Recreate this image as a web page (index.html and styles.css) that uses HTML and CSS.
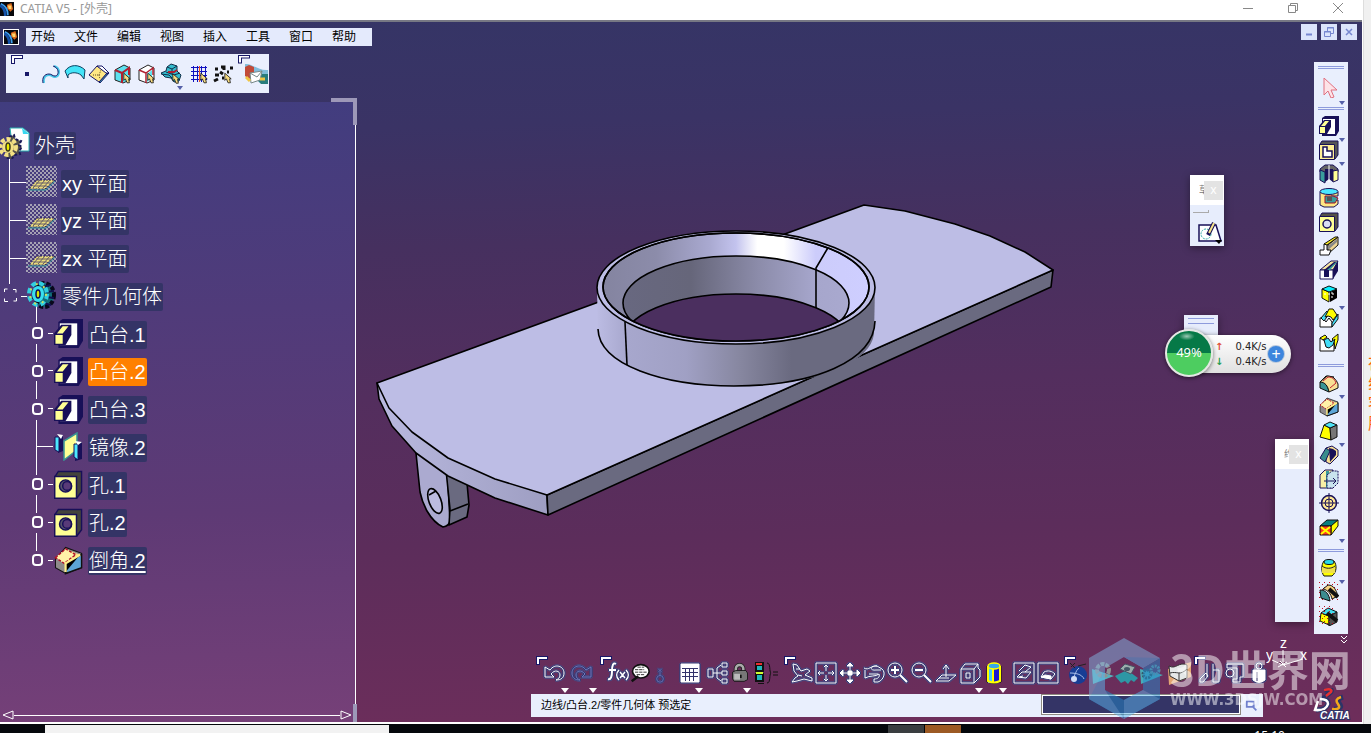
FILE: index.html
```
<!DOCTYPE html>
<html lang="zh-CN">
<head>
<meta charset="utf-8">
<title>CATIA V5 - [外壳]</title>
<link rel="stylesheet" href="styles.css">
</head>
<body>
<svg class="defs" aria-hidden="true">
  <defs>
    <pattern id="dither" width="4" height="4" patternUnits="userSpaceOnUse"><path d="M0 0h2v2H0zM2 2h2v2H2z" fill="#a5a1b4"/></pattern>
    <pattern id="dots" width="5" height="5" patternUnits="userSpaceOnUse"><path d="M0 0h1v1H0zM3 2h1v1H3z" fill="#c01020"/></pattern>
    <linearGradient id="wall"><stop offset="0" stop-color="#bcbce3"/><stop offset=".11" stop-color="#a7a7cd"/><stop offset=".32" stop-color="#a0a0c4"/><stop offset=".52" stop-color="#86869f"/><stop offset=".7" stop-color="#6a6a80"/><stop offset="1" stop-color="#6a6a80"/></linearGradient>
    <linearGradient id="bevel"><stop offset="0" stop-color="#8484a0"/><stop offset=".2" stop-color="#8c8caa"/><stop offset=".4" stop-color="#a9a9d0"/><stop offset=".5" stop-color="#c3c3ee"/><stop offset=".58" stop-color="#fff"/><stop offset=".68" stop-color="#fff"/><stop offset=".8" stop-color="#ccccfb"/><stop offset="1" stop-color="#ceceff"/></linearGradient>
    <linearGradient id="bore"><stop offset="0" stop-color="#686880"/><stop offset=".3" stop-color="#66667a"/><stop offset=".6" stop-color="#8c8caa"/><stop offset=".85" stop-color="#a6a6cc"/><stop offset="1" stop-color="#a9a9cf"/></linearGradient>
    <linearGradient id="edge"><stop offset="0" stop-color="#b9b9df"/><stop offset="1" stop-color="#9e9ec2"/></linearGradient>
    <clipPath id="rim"><ellipse cx="736" cy="287" rx="133" ry="54"/></clipPath>
    <clipPath id="throat"><ellipse cx="736" cy="303" rx="113" ry="47"/></clipPath>
  </defs>
  <symbol id="earth" viewBox="0 0 16 16"><path fill="#08080c" d="M0 0h16v16H0z"/><path fill="#d9661a" d="M8 3l5-2 2 7-3 3-4-4z"/><path fill="#ffd66a" d="M9 4h4v4h-3z"/><path d="M1 2c5 2 8 7 8 13" stroke="#3fa0ee" stroke-width="2" fill="none"/><path d="M0 4c4 2 6 6 6 12" stroke="#1552a8" stroke-width="3" fill="none"/></symbol>
  <symbol id="hand" viewBox="0 0 10 14"><path fill="#f8dc80" stroke="#111" d="M1 1v9l2-2 2 5h3L7 8h2z"/></symbol>
  <symbol id="pad" viewBox="0 0 20 20"><path fill="#181058" d="M3 2l3-2h14v15l-3 5H3z"/><path fill="#fff" d="M4 3h12v15H4z"/><path fill="#181058" d="M5 4h7v7l-4 7H0v-8z"/><path fill="#ffff94" d="M1 11h5v6H1zM2 10l4-5h4l-4 5z"/></symbol>
  <symbol id="pocket" viewBox="0 0 20 20"><path fill="#555" stroke="#181058" d="M1 4l2-3h16v14l-3 4z"/><path fill="#ffef94" stroke="#181058" d="M.5 4.5h15v15H.5z"/><path fill="#fff" stroke="#181058" stroke-width="1.500" d="M4 7h4v4h5v6H4z"/></symbol>
  <symbol id="hole" viewBox="0 0 20 20"><path fill="#555248" stroke="#181058" d="M1 4l2-3h16v14l-3 4z"/><path fill="#ffff94" stroke="#181058" d="M.5 4.5h15v15H.5z"/><circle cx="8" cy="12" r="4" fill="#d8dcf4" stroke="#181058" stroke-width="1.500"/></symbol>
  <symbol id="holetree" viewBox="0 0 20 20"><path fill="#44443c" stroke="#181058" d="M1 4l2-3h16v14l-3 4z"/><path fill="#ffff94" stroke="#181058" d="M.5 4.5h15v15H.5z"/><circle cx="8" cy="11" r="4.200" fill="#55536a" stroke="#181058"/><circle cx="9" cy="11" r="3" fill="#583a78" stroke="#181058"/></symbol>
  <symbol id="shaft" viewBox="0 0 20 20"><path fill="#666" stroke="#181058" d="M1 8V5l5-4h8l5 4v3l-4-2-2 3H7z"/><path fill="#399c9c" stroke="#181058" d="M1 6l5 2v11l-5-3z"/><path fill="#181058" d="M6 5h8v13l-4-3-4 3z"/><path fill="#ffff94" stroke="#181058" d="M14 7l5-1v10l-5 2z"/><path stroke="#fff" d="M10 1v17"/></symbol>
  <symbol id="groove" viewBox="0 0 20 20"><path fill="#ffe784" stroke="#181058" d="M1 4v13l4 2h10l4-3v-4h-7V8h7V4z"/><ellipse cx="10" cy="3.500" rx="9" ry="3" fill="#4ce8ff" stroke="#181058"/><path fill="#399c9c" stroke="#a01028" d="M6 8h8l5 2-3 5H6z"/><path fill="#555" d="M8 9h5v4H8z"/></symbol>
  <symbol id="rib" viewBox="0 0 20 20"><path fill="#efd694" stroke="#111" d="M9 18V9l10-8v8z"/><path fill="#888" d="M8 11l10-8v3l-9 8z"/><path fill="#fff" stroke="#111" d="M1 19v-5h4V8h3v6h4l-2 5z"/><path fill="#ffee20" stroke="#111" d="M5 8l11-7h3L8 9z"/></symbol>
  <symbol id="slot" viewBox="0 0 20 20"><path fill="#f7e7a0" stroke="#181058" d="M1 10L12 1h7l-5 9z"/><path fill="#fff" stroke="#181058" d="M1 19v-9h13v9z"/><path fill="#181058" d="M14 19v-9l5-9v10zM5 10L15 2h3l-8 8v7H5z"/><path fill="#399c9c" d="M8 10l9-8h1l-7 8z"/></symbol>
  <symbol id="rot" viewBox="0 0 20 20"><path fill="#ff0" stroke="#111" d="M3 5l7 3v10l-7-4z"/><path fill="#000" d="M11 8l7-3v9l-7 4z"/><path fill="#08efff" stroke="#111" d="M3 5l7-3 8 3-8 3z"/><path stroke="#fff" stroke-dasharray="2 2" d="M13 8v8M5 10h10"/></symbol>
  <symbol id="loft" viewBox="0 0 20 20"><path fill="#fff" stroke="#111" d="M1 19v-9h3l3 4 3-4 3 4v5z"/><path fill="#43ddf7" stroke="#111" d="M2 10l6-7 2 3-5 7zM13 15l6-9v5l-6 8z"/><path fill="#ff0" stroke="#111" d="M6 9l4-8h4l4 6-4 5-2-3-3-1z"/></symbol>
  <symbol id="loftcut" viewBox="0 0 20 20"><path fill="#fff" stroke="#111" d="M1 19V6l3 1 4 6 5-4 2-2v12z"/><path fill="#ff0" stroke="#111" d="M1 6l5-3 2 2-4 3zM13 7l6-5v6l-3 9-1-8z"/><path fill="#43ddf7" stroke="#111" d="M5 8l4-2 3 4 4-3-2 6-4 3-3-1z"/></symbol>
  <symbol id="fillet" viewBox="0 0 20 20"><path fill="#8a8a8a" stroke="#111" d="M1 9l6-6 8 1-8 6z"/><path fill="#399494" stroke="#111" d="M1 9c5-1 8 4 9 10l-9-4z"/><path fill="#f7df94" stroke="#111" d="M1 9l7-6c6 0 9 3 11 8v4l-9 4C9 13 6 9 1 9z"/><path fill="none" stroke="#c02030" d="M4 8l5-4c5 0 7 3 8 6l-6 5"/></symbol>
  <symbol id="chamfer" viewBox="0 0 20 20"><path fill="#8f8b8b" stroke="#111" stroke-width=".7" d="M1 9l7-8 11 4v10L8 19l-7-4z"/><path fill="#5da6d6" stroke="#111" d="M8 19l1-8 10-5v9z"/><path fill="#f7dc8c" d="M1 8l7-6 10 4-9 7z"/><path fill="#fff3a8" stroke="#b01028" stroke-dasharray="2 1" d="M1 8l7-6 7 4-8 6z"/><path stroke="#fff08b" stroke-width="1.500" d="M8 18v-6l10-6"/></symbol>
  <symbol id="draft" viewBox="0 0 20 20"><path fill="#ff0" stroke="#111" d="M5 4l6 3 1 12-11-3z"/><path fill="#777" stroke="#111" d="M11 7l7-3v12l-6 3z"/><path fill="#4de2f4" stroke="#111" d="M5 4l6-3 7 3-7 3z"/></symbol>
  <symbol id="shell" viewBox="0 0 20 20"><path fill="#f8df94" stroke="#181058" d="M7 3l6-2 6 4v6l-8 8-4-2z"/><path fill="#181058" d="M10 3l4 1 3 2v4l-6 7z"/><path fill="#398c8c" stroke="#181058" d="M1 13L7 3l4 3-5 11z"/></symbol>
  <symbol id="thick" viewBox="0 0 20 20"><path fill="#f7efa5" stroke="#181058" d="M1 6l5-5h8v18H1z"/><path fill="#399c9c" d="M7 2h3v17H7z"/><path fill="#c9e4ee" stroke="#181058" stroke-dasharray="2 1" d="M8 6l5-4h6v12l-5 5H8z"/><path stroke="#181058" d="M5 12h12m-3-3l3 3-3 3" fill="none"/></symbol>
  <symbol id="thread" viewBox="0 0 20 20"><circle cx="10" cy="10" r="7.500" fill="#ffe894" stroke="#181058" stroke-width="1.500"/><circle cx="10" cy="10" r="4" fill="none" stroke="#181058"/><path stroke="#181058" d="M10 0v20M0 10h20"/></symbol>
  <symbol id="remove" viewBox="0 0 20 20"><path fill="#087f7f" stroke="#111" d="M1 9l7-6h11l-7 6z"/><path fill="#ff0" stroke="#111" d="M12 9l7-6v6l-7 9z"/><path fill="#ff3a20" stroke="#111" d="M1 9h11v9H1z"/><path stroke="#ff0" stroke-width="2" d="M2 10l9 7M11 10l-9 7"/></symbol>
  <symbol id="barrel" viewBox="0 0 20 20"><path fill="#ff0" stroke="#111" d="M5 3C2 7 2 14 5 18h8c5-4 5-11 2-15z"/><path fill="#efe04a" d="M3 9h13v6H3z"/><path fill="none" stroke="#222" d="M3 8c4 3 9 3 13 0"/><ellipse cx="10" cy="4" rx="5" ry="2.500" fill="#28d8e8" stroke="#111"/></symbol>
  <symbol id="dress" viewBox="0 0 20 20"><path fill="url(#dots)" d="M0 0h20v20H0z"/><path fill="#3c8c90" stroke="#111" d="M1 8c6 0 9 4 10 11L2 16z"/><path fill="#f4cf80" stroke="#111" d="M4 7l5-4c6 0 8 5 10 11l-6 3C12 12 9 8 4 7z"/><path stroke="#111" stroke-width="4" d="M10 7l9 8"/></symbol>
  <symbol id="dress2" viewBox="0 0 20 20"><path fill="#ff0" stroke="#111" d="M2 7l8 3v9L1 15z"/><path fill="#555" stroke="#111" d="M10 10l8-4v10l-8 4z"/><path fill="#46dced" stroke="#111" d="M2 7l7-5 9 4-8 4z"/><path fill="url(#dots)" d="M0 0h14v20H0z"/><path stroke="#111" stroke-width="4" d="M8 7l10 8"/></symbol>
</svg>

<div class="desktop">
  <section class="app">
    <header class="titlebar">
      <svg class="appicon"><use href="#earth"/></svg>
      <h1>CATIA V5 - [外壳]</h1>
      <div class="winbtns">
        <button aria-label="最小化"><svg viewBox="0 0 12 12"><path d="M1 6.500h10"/></svg></button>
        <button aria-label="还原"><svg viewBox="0 0 12 12"><path d="M1.500 3.500h7v7h-7zM3.500 3V1.500h7v7H9"/></svg></button>
        <button aria-label="关闭"><svg viewBox="0 0 12 12"><path d="M1 1l10 10M11 1L1 11"/></svg></button>
      </div>
    </header>

    <main class="workspace">
      <svg class="model" viewBox="0 22 1362 700" preserveAspectRatio="xMidYMid meet" role="img" aria-label="外壳零件">
        <g stroke="#000" stroke-width="1.600" stroke-linejoin="round" fill="none">
          <path fill="#abaad0" d="M416 453l4 39q2 10 7 19 7 12 16 16 6-1 7-6l-3-55z"/>
          <path fill="#6a6a80" d="M446 470l21 13 2 22-2 12-18 8 1-16z"/>
          <path d="M450 511l18-7"/>
          <ellipse cx="435" cy="501" rx="6" ry="13" transform="rotate(-21 435 501)" fill="#bcbce0"/>
          <path d="M429 495l7-4"/>
          <path fill="url(#edge)" d="M377 383l2 16 13 27 24 27 32 23 47 22 53 17-1-20z"/>
          <path fill="#6a6a80" d="M547 495l1 20 503-228 2-17z"/>
          <path fill="#bdbde5" d="M377 383L864 205l41 6 50 13 35 12 35 16 28 18-506 225-52-16-47-21-36-26-23-24z"/>
          <path fill="url(#wall)" stroke="none" d="M597 288l1 46c4 30 60 52 138 52s134-22 138-52l1-46z"/>
          <path d="M598 329c1 36 66 57 136 57 80 0 140-25 141-65"/>
          <path d="M625 322l2 43"/>
          <ellipse cx="736" cy="287.500" rx="139" ry="56.500" fill="#bdbde5"/>
          <ellipse cx="736" cy="287" rx="133" ry="54" fill="url(#bevel)"/>
          <g clip-path="url(#rim)">
            <ellipse cx="736" cy="303" rx="113" ry="47" fill="url(#bore)"/>
            <path d="M829 246l-13 22v40"/>
            <g clip-path="url(#throat)"><ellipse cx="736" cy="341" rx="113" ry="47" fill="#4b2f5f"/></g>
          </g>
          <ellipse cx="736" cy="287" rx="133" ry="54"/>
        </g>
      </svg>

      <div class="topbar">
        <svg class="docicon"><use href="#earth"/></svg>
        <nav class="menu">
          <button>开始</button><button>文件</button><button>编辑</button><button>视图</button><button>插入</button><button>工具</button><button>窗口</button><button>帮助</button>
        </nav>
        <div class="mdi">
          <button aria-label="最小化文档"><svg viewBox="0 0 16 16"><path d="M5 10.500h6" stroke-width="2"/></svg></button>
          <button aria-label="还原文档"><svg viewBox="0 0 16 16"><path d="M3.500 7.500h6v5h-6zM6.500 7V3.500h6v6H10M3 8h7M6 4h7"/></svg></button>
          <button aria-label="关闭文档"><svg viewBox="0 0 16 16"><path d="M5 5l6 6M11 5l-6 6" stroke-width="1.500"/></svg></button>
        </div>
      </div>

      <div class="body">
        <div class="left">
          <div class="tools corner">
            <button aria-label="点"><svg viewBox="0 0 22 22"><path fill="#181868" d="M9 9h4v4H9z"/></svg></button>
            <button aria-label="曲线"><svg viewBox="0 0 22 22"><path d="M4 20c-1-5 1-8 5-8 3 0 3 2 6 2 5 0 6-9-1-11" fill="none" stroke="#48c8e8" stroke-width="2"/><path d="M3 20c-1-5 1-9 6-9 3 0 3 2 6 2 4 0 5-8-2-10" fill="none" stroke="#181868"/></svg></button>
            <button aria-label="曲面"><svg viewBox="0 0 22 22"><path fill="#43e4f8" stroke="#104060" d="M1 8c5-7 14-7 20-1l-1 9-3-4c-4-3-10-3-13 0v3z"/></svg></button>
            <button aria-label="实体"><svg viewBox="0 0 22 22"><path fill="#399cac" stroke="#181868" d="M11 19l7-8 3-1-9 10z"/><path fill="#ffe784" stroke="#181868" d="M1 12l8-9 10 7-8 9z"/><path fill="#fff" stroke="#181868" d="M9 3h5l7 7h-3z"/><path d="M5 12h6l2-5M11 12l1 4" fill="none" stroke="#604a20" stroke-dasharray="1 1"/></svg></button>
            <button aria-label="选择几何体"><svg viewBox="0 0 22 22"><path fill="#5de1ef" stroke="#222" d="M3 7l9-5 6 3v12l-7 3-8-3z"/><path d="M3 7l7 3v10M10 10l7-5v7" fill="none" stroke="#b02030" stroke-width="2"/><use href="#hand" x="11" y="9" width="8" height="12"/></svg></button>
            <button aria-label="选择边线"><svg viewBox="0 0 22 22"><path fill="#fff" stroke="#222" d="M3 7l9-5 6 3v12l-7 3-8-3z"/><path d="M3 7l7 3v10M10 10l7-5v7" fill="none" stroke="#b02030" stroke-width="1.500"/><path fill="#5de1ef" d="M11 11l5-4v8l-5 4z"/><use href="#hand" x="11" y="9" width="8" height="12"/></svg></button>
            <button class="drop" aria-label="选择特征"><svg viewBox="0 0 22 22"><path fill="#35bccd" stroke="#12304a" d="M7 4l4-3 6 2v5l4 4-2 6-5 1-3-4-6-1-4-4 5-2z"/><path d="M7 4l5 2 5-3M12 6v5M6 9l8 3 6-2M1 11l8 1 3 3" fill="none" stroke="#12304a"/><path d="M8 9h6l3-2" stroke="#b02030" stroke-width="2" fill="none"/><use href="#hand" x="12" y="10" width="8" height="11"/></svg></button>
            <button class="shift" aria-label="网格选择"><svg viewBox="0 0 22 22"><path d="M3 4.500h16M3 8.500h16M3 12.500h16M3 16.500h16M5.500 3v16M9.500 3v16M13.500 3v16M17.500 3v16" stroke="#1010c0"/><path d="M11.500 3v16" stroke="#f05020"/><use href="#hand" x="12" y="9" width="8" height="12"/></svg></button>
            <button aria-label="点选择"><svg viewBox="0 0 22 22"><path d="M3 6h3M9 4h3v3M18 5h3M3 12h4M2 18l4-2M15 9h2M8 9l3 2M10 15h2" stroke="#111" stroke-width="3"/><use href="#hand" x="12" y="9" width="8" height="12"/></svg></button>
            <button class="mail corner" aria-label="发送"><svg viewBox="0 0 24 24"><path fill="#82bddb" d="M1 2c7-1 13 7 23 6v10H14C12 10 8 7 1 6z"/><path fill="#c24a38" d="M1 5l4-2 5 2v9l-5 3-4-3z"/><path fill="#287c7c" d="M16 12h8v10h-7l-3-3z"/><path fill="#fff" stroke="#788" d="M6 11l12-2-2 9-9 3z"/><path fill="none" stroke="#788" d="M6 11l7 4 5-6"/><path d="M2 15l4 4M16 17h5" stroke="#efc543" stroke-width="3" fill="none"/></svg></button>
          </div>

          <aside class="panel">
            <svg class="links" viewBox="0 0 356 620" aria-hidden="true">
              <path d="M9.500 55v127M10 80.500h16M10 118.500h16M10 156.500h16M21 194.500h6M36.500 203v18M36.500 242v18M36.500 279v18M36.500 318v55M37 344.500h16M36.500 393v18M36.500 431v18M48 231.500h5M48 268.500h5M48 306.500h5M48 382.500h5M48 420.500h5M48 458.500h5"/>
              <path d="M4.500 190v-3h3M13 187.500h3v3M16.500 196v3h-3M8 199.500H4.500v-3"/>
              <g stroke-width="2"><rect x="33" y="226" width="9" height="10" rx="3"/><rect x="33" y="264" width="9" height="10" rx="3"/><rect x="33" y="302" width="9" height="10" rx="3"/><rect x="33" y="377" width="9" height="10" rx="3"/><rect x="33" y="415" width="9" height="10" rx="3"/><rect x="33" y="453" width="9" height="10" rx="3"/></g>
            </svg>
            <ul class="tree">
              <li class="root"><svg viewBox="0 0 30 32"><path fill="#fff" stroke="#28aeb0" d="M10 1h13l6 5v18H13z"/><path fill="#38d8f0" d="M22 1l7 6h-6z"/><path d="M9 10l5-2 1 4 6 2-2 4 3 2-3 4 1 3-6 1-2 4-6-1z" fill="#55524a" stroke="#181858" stroke-dasharray="3 2" stroke-width="2"/><circle cx="8" cy="20" r="6" fill="#f4e184"/><circle cx="8" cy="20" r="8" fill="none" stroke="#f4e184" stroke-width="4" stroke-dasharray="4 2"/><ellipse cx="8" cy="20" rx="2" ry="4" fill="#ee0" stroke="#383818" stroke-width="1.500"/></svg><span>外壳</span></li>
              <li class="l1"><svg viewBox="0 0 31 31"><path fill="url(#dither)" d="M0 0h31v31H0z"/><path d="M11 14h18l-10 9H3z" fill="#e9db7c" stroke="#28205e" stroke-dasharray="2 1"/><path d="M2 24h18l9-9" fill="none" stroke="#399c9c"/><path d="M10 17h15M7 20h14M14 14l-7 8M19 14l-7 8M24 14l-7 8" stroke="#645a68" fill="none"/></svg><span>xy 平面</span></li>
              <li class="l1"><svg viewBox="0 0 31 31"><path fill="url(#dither)" d="M0 0h31v31H0z"/><path d="M11 14h18l-10 9H3z" fill="#e9db7c" stroke="#28205e" stroke-dasharray="2 1"/><path d="M2 24h18l9-9" fill="none" stroke="#399c9c"/><path d="M10 17h15M7 20h14M14 14l-7 8M19 14l-7 8M24 14l-7 8" stroke="#645a68" fill="none"/></svg><span>yz 平面</span></li>
              <li class="l1"><svg viewBox="0 0 31 31"><path fill="url(#dither)" d="M0 0h31v31H0z"/><path d="M11 14h18l-10 9H3z" fill="#e9db7c" stroke="#28205e" stroke-dasharray="2 1"/><path d="M2 24h18l9-9" fill="none" stroke="#399c9c"/><path d="M10 17h15M7 20h14M14 14l-7 8M19 14l-7 8M24 14l-7 8" stroke="#645a68" fill="none"/></svg><span>zx 平面</span></li>
              <li class="l1"><svg viewBox="0 0 31 31"><ellipse cx="18" cy="16" rx="10" ry="12" fill="#106d7a" stroke="#08081c" stroke-width="4" stroke-dasharray="4 2"/><path d="M16 8l9-2M20 13l8-1M20 18l8 1M17 24l8 2" stroke="#101050" stroke-width="2"/><ellipse cx="12" cy="15" rx="6" ry="8" fill="#38dff0"/><ellipse cx="12" cy="15" rx="9" ry="11" fill="none" stroke="#30cfe0" stroke-width="4" stroke-dasharray="5 3"/><ellipse cx="12" cy="15" rx="8" ry="10" fill="none" stroke="#c9e060" stroke-width="2" stroke-dasharray="2 6"/><ellipse cx="12" cy="15" rx="2" ry="4" fill="#d8e800" stroke="#101050" stroke-width="1.500"/></svg><span>零件几何体</span></li>
              <li class="l2"><svg><use href="#pad"/></svg><span>凸台.1</span></li>
              <li class="l2"><svg><use href="#pad"/></svg><span class="sel">凸台.2</span></li>
              <li class="l2"><svg><use href="#pad"/></svg><span>凸台.3</span></li>
              <li class="l2"><svg viewBox="0 0 29 29"><path fill="#181058" d="M5 5l4-2v16l-5 2zM22 11l6-1v17l-7 2z"/><path fill="#4ce8ff" stroke="#181058" d="M1 5h4v15l-4-2z"/><path fill="#ffff94" stroke="#399494" stroke-width="1.500" d="M10 9l13-8v17l-13 10z"/><path fill="#4ce8ff" stroke="#181058" d="M20 12h4v16l-4-3z"/><path fill="#fff" d="M3 2l6 1-2 4zM21 9l7 1-4 3z"/></svg><span>镜像.2</span></li>
              <li class="l2"><svg><use href="#holetree"/></svg><span>孔.1</span></li>
              <li class="l2"><svg><use href="#holetree"/></svg><span>孔.2</span></li>
              <li class="l2"><svg><use href="#chamfer"/></svg><span class="cur">倒角.2</span></li>
            </ul>
            <svg class="hscroll" viewBox="0 0 350 12" preserveAspectRatio="none" aria-hidden="true"><path d="M12 6.500h326M1 6l10-4v8zM349 6l-10-4v8z"/></svg>
          </aside>
        </div>

        <div class="middle">
          <div class="viewbar">
            <div class="grp corner ga">
              <button class="w28 drop" aria-label="撤销"><svg viewBox="0 0 24 24"><path d="M3 6v10h9l-3-3c4-5 9-3 9 1 0 3-2 4-4 5 5 0 8-2 8-7 0-7-9-10-14-3z"/></svg></button>
              <button class="w28 drop dim" aria-label="重做"><svg viewBox="0 0 24 24"><path d="M21 6v10h-9l3-3c-4-5-9-3-9 1 0 3 2 4 4 5-5 0-8-2-8-7 0-7 9-10 14-3z"/></svg></button>
            </div>
            <div class="grp corner gb">
              <button aria-label="公式"><svg viewBox="0 0 24 24"><path d="M10 3C7 1 6 5 6 10s-1 9-4 8M3 9h7" stroke-width="2"/><path d="M13 9c-3 3-3 7 0 10M20 9c3 3 3 7 0 10M14 11l5 6M19 11l-5 6" stroke-width="1.500"/></svg></button>
              <button class="w20 plain" aria-label="注释"><svg viewBox="0 0 24 24"><ellipse cx="13" cy="10" rx="10" ry="8" fill="#fff" stroke="#111" stroke-width="2"/><path d="M2 22l8-6" stroke="#111" stroke-width="3"/><path d="M6 8h11M6 11h14M8 14h9M9 5h8" stroke="#111" stroke-dasharray="4 1"/></svg></button>
              <button class="w20 dim" aria-label="钥匙"><svg viewBox="0 0 24 24"><path d="M10 7l4 4M14 7l-4 4M12 11v4"/><circle cx="12" cy="19" r="4"/></svg></button>
              <button class="drop ml8" aria-label="设计表"><svg viewBox="0 0 24 24"><path fill="#fff" d="M3 3h18v18H3z"/><path stroke="#33336b" d="M4 7.500h16M4 11.500h16M4 15.500h16M7.500 7v13M11.500 7v13M15.500 7v13"/></svg></button>
              <button class="ml4" aria-label="结构"><svg viewBox="0 0 24 24"><path d="M2 8h5v8H2zM16 2h5v4h-5zM16 10h5v4h-5zM16 18h5v4h-5zM7 12h9M11 12V7l4-3M11 12v5l4 3"/></svg></button>
              <button class="w20 plain drop" aria-label="锁定"><svg viewBox="0 0 24 24"><path d="M7 11V7c0-6 9-6 9 0v5" stroke="#222" stroke-width="5" fill="none"/><path d="M7 11V7c0-6 9-6 9 0v5" stroke="#aaa" stroke-width="3" fill="none"/><path fill="#777" stroke="#111" d="M3 11l4-2h12l2 3v8l-4 2H5l-2-3z"/><path fill="#bbb" d="M5 13h7v7H5z"/><path stroke="#111" stroke-width="2" d="M13 14v4"/></svg></button>
              <button class="plain ml4" aria-label="规则"><svg viewBox="0 0 24 24"><path fill="#111" d="M1 1h9v10H1zM1 12h9v9H1z"/><path fill="#e83030" d="M2 2h6v2H2z"/><path fill="#cfff30" d="M2 11h7v2H2z"/><path fill="#20b8bc" d="M3 5h5v4H3zM3 14h5v5H3z"/><path stroke="#111" d="M4 22.500h6M13 2c4 0 2 9 4 10-2 1 0 10-4 10M19 11h5M19 14h5" fill="none"/></svg></button>
            </div>
            <div class="grp corner gc">
              <button aria-label="飞行"><svg viewBox="0 0 24 24"><path d="M3 3l4 1 4 6 6-2 3 2-5 4 7 3v3l-8-2-7 2-5 1 3-4 3-2-4-5z"/><path d="M6 8h4M8 14l4 1"/></svg></button>
              <button aria-label="适应屏幕"><svg viewBox="0 0 24 24"><path d="M2 2h20v20H2zM12 5v5M12 14v5M5 12h5M14 12h5M10 6l2-2 2 2M10 18l2 2 2-2M6 10l-2 2 2 2M18 10l2 2-2 2"/></svg></button>
              <button aria-label="平移"><svg viewBox="0 0 24 24"><path d="M12 2v20M2 12h20"/><path fill="#fff" d="M9 5l3-3 3 3zM9 19l3 3 3-3zM5 9l-3 3 3 3zM19 9l3 3-3 3zM10 10h4v4h-4z"/></svg></button>
              <button aria-label="旋转"><svg viewBox="0 0 24 24"><path d="M2 7c5 3 7-3 13-2l5 3c4 3 2 11-4 13h-4v-3c4 0 6-2 5-5-3 3-9 1-14 4V9M15 5c-8 0-7 5-1 4h5M7 13h9"/></svg></button>
              <button aria-label="放大"><svg viewBox="0 0 24 24"><circle cx="9" cy="9" r="7"/><path d="M5 9h8M9 5v8M14 14l7 7" stroke-width="2"/></svg></button>
              <button aria-label="缩小"><svg viewBox="0 0 24 24"><circle cx="9" cy="9" r="7"/><path d="M5 9h8M14 14l7 7" stroke-width="2"/></svg></button>
              <button aria-label="法线视图"><svg viewBox="0 0 24 24"><path d="M2 20l6-6h14l-7 6zM12 16V4M9 8l3-4 3 4M8 14l-3 3h10"/></svg></button>
              <button class="drop" aria-label="等轴测视图"><svg viewBox="0 0 24 24"><path d="M3 8h13v14H3zM3 8l4-5h13v4l2 2v7l-6 6M16 8l4-5M8 12h4v5H8z"/></svg></button>
              <button class="plain drop" aria-label="着色"><svg viewBox="0 0 24 24"><path fill="#1818d0" stroke="#111" d="M5 5h14v16q-7 3-14 0z"/><path fill="#4cf" d="M6 7h5v15H6z"/><path d="M11 8v14M6 5v15q6 3 12 0V5" stroke="#ff0" stroke-width="2" fill="none"/><ellipse cx="12" cy="5" rx="6" ry="3" fill="#38a8e8" stroke="#ff0" stroke-width="1.500"/></svg></button>
              <button class="ml6" aria-label="隐藏显示"><svg viewBox="0 0 24 24"><path d="M2 2h20v20H2zM5 16l5-5h9l-5 6zM7 10l6-6 6 2-6 5M7 16l4-1"/></svg></button>
              <button aria-label="交换可视空间"><svg viewBox="0 0 24 24"><path d="M2 2h20v20H2z"/><path d="M5 16l3-5c4-2 8-1 11 2l-4 5z"/><path fill="#fff" d="M5 16l4-2 6 1v3z"/></svg></button>
            </div>
            <div class="grp corner gd">
              <button class="plain" aria-label="渲染"><svg viewBox="0 0 24 24"><circle cx="11" cy="14" r="9" fill="#173d94"/><path d="M5 18c4-4 3-8 7-11M3 12c5 0 12 1 14 6" stroke="#a8bde8" fill="none"/><circle cx="7" cy="18" r="3" fill="#d0dcf6"/><path d="M3 2l5 5M8 2L4 6M11 5l8-2" stroke="#222"/></svg></button>
              <button class="plain" aria-label="材料"><svg viewBox="0 0 24 24"><path fill="#54b2bd" d="M1 8l22 7-21 8z"/><circle cx="12" cy="9" r="6" fill="none" stroke="#8e9294" stroke-width="4" stroke-dasharray="4 1"/></svg></button>
              <button class="plain" aria-label="零件"><svg viewBox="0 0 24 24"><path fill="#2e97a5" d="M0 15l12-6 11 8-4 4-3-2-3 4-3-3-4 2z"/><path fill="#9cacac" stroke="#456" d="M5 8l5-5 10 3-4 7z"/><ellipse cx="12" cy="8" rx="3" ry="2" fill="#456"/></svg></button>
              <button class="plain" aria-label="装配"><svg viewBox="0 0 24 24"><path fill="#4aacb7" d="M1 8l23 6-22 9z"/><circle cx="8" cy="13" r="4" fill="none" stroke="#345a68" stroke-width="3" stroke-dasharray="2 1"/><circle cx="16" cy="9" r="4" fill="none" stroke="#6f8f98" stroke-width="3" stroke-dasharray="2 1"/></svg></button>
              <button class="plain ml4" aria-label="曲面分析"><svg viewBox="0 0 24 24"><path fill="#e3a673" d="M1 8L24 1v15L2 24z"/><path fill="#e5e8e8" stroke="#333" d="M2 5c7 4 10-5 18-1v13l-8 3-9-5z"/><path d="M3 12c7-2 10 3 17-4M12 11v9" stroke="#333" fill="none"/></svg></button>
            </div>
            <div class="grp corner ge">
              <button aria-label="测量间距"><svg viewBox="0 0 24 24"><path d="M9 3v13M15 3v6M2 18l6-6 2 3-5 6H2zM15 9h6v12h-6z"/></svg></button>
              <button aria-label="测量项"><svg viewBox="0 0 24 24"><path d="M5 3h16v13h-3v5h-7v-3h4V7H5z"/><circle cx="8" cy="12" r="4"/></svg></button>
              <button aria-label="测量惯量"><svg viewBox="0 0 24 24"><path fill="#fff" d="M7 9h12v10q-6 5-12 0z"/><circle cx="13" cy="5" r="3"/><path stroke="#33336b" d="M11 11v9"/></svg></button>
            </div>
          </div>
          <div class="status">
            <output>边线/凸台.2/零件几何体 预选定</output>
            <input type="text" aria-label="命令">
            <button aria-label="搜索"><svg viewBox="0 0 16 16"><path d="M2 3h8v6H2zM8 8l5 5" fill="none" stroke="#7080cc" stroke-width="2"/></svg></button>
          </div>
        </div>

        <div class="right">
          <div class="rail">
            <i></i>
            <button class="drop tall" aria-label="选择"><svg viewBox="0 0 20 20"><path fill="#fde3e8" stroke="#e07080" d="M5 0v17l4-4 3 7 3-1-3-7h6z"/></svg></button>
            <i></i>
            <button class="drop" aria-label="凸台"><svg><use href="#pad"/></svg></button>
            <button class="drop" aria-label="凹槽"><svg><use href="#pocket"/></svg></button>
            <button aria-label="旋转体"><svg><use href="#shaft"/></svg></button>
            <button aria-label="旋转槽"><svg><use href="#groove"/></svg></button>
            <button aria-label="孔"><svg><use href="#hole"/></svg></button>
            <button aria-label="肋"><svg><use href="#rib"/></svg></button>
            <button aria-label="开槽"><svg><use href="#slot"/></svg></button>
            <button class="drop" aria-label="加强肋"><svg><use href="#rot"/></svg></button>
            <button aria-label="放样"><svg><use href="#loft"/></svg></button>
            <button aria-label="移除放样"><svg><use href="#loftcut"/></svg></button>
            <i></i>
            <button class="drop" aria-label="圆角"><svg><use href="#fillet"/></svg></button>
            <button aria-label="倒角"><svg><use href="#chamfer"/></svg></button>
            <button class="drop" aria-label="拔模"><svg><use href="#draft"/></svg></button>
            <button aria-label="抽壳"><svg><use href="#shell"/></svg></button>
            <button aria-label="厚度"><svg><use href="#thick"/></svg></button>
            <button aria-label="螺纹"><svg><use href="#thread"/></svg></button>
            <button class="drop" aria-label="移除面"><svg><use href="#remove"/></svg></button>
            <i></i>
            <button class="drop" aria-label="曲面"><svg><use href="#barrel"/></svg></button>
            <button aria-label="缝合"><svg><use href="#dress"/></svg></button>
            <button aria-label="封闭"><svg><use href="#dress2"/></svg></button>
          </div>
          <svg class="more" viewBox="0 0 8 8" aria-hidden="true"><path d="M1 0l3 3 3-3M1 4l3 3 3-3"/></svg>
        </div>
      </div>

      <div class="float sketch">
        <div class="ftitle"><b>草</b><button aria-label="关闭草图工具栏">x</button></div>
        <div class="fgrip"></div>
        <button class="fbtn" aria-label="草图"><svg viewBox="0 0 26 24"><path fill="#fff" stroke="#181058" stroke-width="1.500" d="M2 5h17l5 16H2z"/><circle cx="9" cy="14" r="5" fill="none" stroke="#35aaa8" stroke-dasharray="2 1"/><path d="M11 15l6-12" stroke="#181058" stroke-width="4"/><path d="M12 13l5-10" stroke="#f8e58a" stroke-width="2"/><path d="M18 20h7l-3 4z"/></svg></button>
      </div>
      <div class="float stub"></div>
      <div class="float long"><div class="ftitle"><b>约</b><button aria-label="关闭约束工具栏">x</button></div></div>

      <div class="net">
        <div class="ball">49%</div>
        <div class="rates"><p><b class="up">↑</b>0.4K/s</p><p><b class="dn">↓</b>0.4K/s</p></div>
        <button aria-label="加速">+</button>
      </div>

      <svg class="axis" viewBox="0 0 44 32" aria-hidden="true"><path d="M17 11v15M17 26l-11-5M17 26l20-6M12 26h7M12 28l9-5M14 22l6 6"/><text x="14" y="9">z</text><text x="34" y="21">x</text><text x="0" y="21">y</text></svg>

      <svg class="ds" viewBox="0 0 42 32" role="img" aria-label="CATIA"><g fill="none" stroke="#2b3468" stroke-width="5"><path d="M11 2q9-2 7 2l-5 4M3 22q10 0 12-6 1-5-7-5l5-2M21 21q10 0 5-6-3-4 4-6"/></g><g fill="none" stroke-width="2.500"><path stroke="#e83030" d="M11 2q9-2 7 2l-5 4"/><path stroke="#fff" d="M5 13L2 22q11 1 13-6 0-5-8-5"/><path stroke="#f4a81c" d="M19 21q10 1 6-5-4-5 3-7"/></g><text x="7" y="31">CATIA</text></svg>

      <div class="watermark" aria-hidden="true">
        <svg viewBox="0 0 72 82"><path fill="#82b6e3" d="M36 1l36 20-17 10-19-11-19 11v22L1 62V21z"/><path fill="#238acd" d="M72 21v41L36 82 1 62l16-9 19 10 19-10V31z"/><path fill="#5cb6ef" d="M17 31L1 62l35 20-19-29zM36 20L72 21 55 31zM36 63l19-10 17 9-36 20z"/></svg>
        <div><strong>3D世界网</strong><small>WWW.3DSJW.COM</small></div>
      </div>
    </main>
  </section>

  <aside class="behind"><p>在线客服</p></aside>

  <footer class="taskbar">
    <div class="search"></div><div class="t1"></div><div class="t2"></div><time>15:10</time>
  </footer>
</div>
</body>
</html>
```
FILE: styles.css
```
* { box-sizing: border-box; }
body { margin: 0; overflow: hidden; font: 12px/16px "Noto Sans", "Noto Sans CJK SC", sans-serif; }
button { border: 0; padding: 0; margin: 0; background: none; font: inherit; color: inherit; display: grid; place-items: center; }
svg { display: block; }
.defs { position: absolute; width: 0; height: 0; }

.desktop { height: 100vh; display: grid; grid-template: minmax(0, 1fr) 9px / minmax(0, 1fr) 8px; }
.app { display: flex; flex-direction: column; border-right: 1px solid #fff; min-height: 0; }

.titlebar { height: 20px; background: #fff; display: flex; align-items: flex-start; color: #999; }
.appicon { width: 14px; height: 14px; margin: 2px 6px 0 0; }
.titlebar h1 { margin: 0; font: 12px/17px "Noto Sans", "Noto Sans CJK SC", sans-serif; }
.winbtns { margin-left: auto; display: flex; padding: 1px 2px 0 0; }
.winbtns button { width: 45px; height: 14px; }
.winbtns svg { width: 12px; height: 12px; fill: none; stroke: #888; }

.workspace { position: relative; flex: 1; min-height: 0; display: flex; flex-direction: column; border-top: 2px solid #777884; border-bottom: 2px solid #fff;
  background: linear-gradient(178deg, #353566 0, #3a3365 16%, #46305f 32%, #532e5e 52%, #5c2d5b 72%, #6e2e5b 100%); }
.model { position: absolute; inset: 0; width: 100%; height: 100%; }
.topbar { position: relative; display: flex; align-items: flex-start; height: 32px; padding: 2px 5px 0 3px; }
.docicon { width: 16px; height: 16px; border: 1px solid #fff; margin: 5px 7px 0 0; }
.menu { display: flex; gap: 19px; height: 18px; margin-top: 4px; padding: 0 16px 0 5px; background: #e4eafc; color: #000; line-height: 18px; }
.menu button { width: 24px; white-space: nowrap; }
.mdi { margin-left: auto; display: flex; gap: 4px; }
.mdi button { width: 16px; height: 16px; background: #dbe4fb; }
.mdi svg { width: 16px; height: 16px; fill: none; stroke: #7787d0; }

.body { position: relative; flex: 1; min-height: 0; display: flex; }
.left { width: 357px; display: flex; flex-direction: column; }
.corner { position: relative; }
.corner::before, .corner::after { content: ""; position: absolute; left: -1px; top: -1px; width: 12px; height: 9px; background: #181868; clip-path: polygon(0 0, 100% 0, 100% 4px, 4px 4px, 4px 100%, 0 100%); }
.corner::after { left: 0; top: 0; width: 10px; height: 7px; background: #fff; clip-path: polygon(0 0, 100% 0, 100% 2px, 2px 2px, 2px 100%, 0 100%); }
.tools { display: flex; align-items: center; width: 263px; height: 39px; margin-left: 6px; padding-left: 9px; background: #eaeffd; }
.tools.corner::before { left: 5px; top: 1px; }
.tools.corner::after { left: 6px; top: 2px; }
.tools button { width: 24px; height: 24px; position: relative; }
.tools svg { width: 22px; height: 22px; }
.tools .shift { margin-left: 4px; }
.tools .mail { width: 26px; margin-left: 8px; }
.tools .mail svg { width: 24px; height: 24px; }
.tools .mail::before { left: -5px; top: -7px; }
.tools .mail::after { left: -4px; top: -6px; }

.drop { position: relative; }
.drop::after { content: ""; position: absolute; border: solid transparent; border-width: 4px 3px 0; border-top-color: #5560a8; right: 0; bottom: -4px; }

.panel { position: relative; flex: 1; margin-top: 9px; width: 356px; border-right: 1px solid #fff; display: flex; flex-direction: column; padding-top: 25px;
  background: linear-gradient(178deg, #413d7f 0, #503b7a 34%, #5e3a75 66%, #764078 100%); }
.panel::before, .panel::after { content: ""; position: absolute; right: -2px; width: 22px; height: 23px; border: 4px solid #9d98b8; border-left: 0; border-bottom: 0; top: -4px; }
.panel::after { top: auto; bottom: 0; width: 4px; height: 18px; border-top: 0; }
.links { position: absolute; left: 0; top: 0; width: 356px; height: 620px; fill: none; stroke: #fff; }
.tree { position: relative; list-style: none; margin: 0; padding: 0; height: 453px; display: grid; grid-auto-rows: 1fr; color: #fff; font-family: "Liberation Sans", "Noto Sans CJK SC", sans-serif; font-size: 20px; font-weight: 300; line-height: 28px; }
.tree li { display: flex; align-items: center; }
.tree span { height: 28px; padding: 0 1px; background: #343466; border-radius: 2px; white-space: pre; }
.tree .sel { background: #ff8000; }
.tree .cur { text-decoration: underline; text-decoration-thickness: 2px; text-underline-offset: 3px; }
.root svg { width: 30px; height: 32px; margin: -6px 4px 0 0; }
.l1 { padding-left: 26px; }
.l1 svg { width: 31px; height: 31px; margin: -4px 4px 0 0; }
.l2 { padding-left: 54px; }
.l2 svg { width: 29px; height: 29px; margin: -2px 5px 0 0; }
.hscroll { width: 350px; height: 12px; margin: auto 0 1px 2px; fill: none; stroke: #fff; }

.middle { flex: 1; min-width: 0; padding: 0 0 5px 174px; display: flex; flex-direction: column; justify-content: flex-end; align-items: flex-start; }
.viewbar { display: flex; margin: 0 0 0 6px; height: 37px; }
.grp { display: flex; padding-top: 4px; height: 28px; }
.grp button { width: 24px; height: 24px; }
.grp svg { width: 24px; height: 24px; fill: none; stroke: #fff; filter: drop-shadow(1px 0 #34346c) drop-shadow(-1px 0 #34346c) drop-shadow(0 1px #4c477f) drop-shadow(0 -1px #4c477f); }
.grp .plain svg { filter: none; stroke: none; }
.grp .dim svg { stroke: #7079bd; }
.grp .drop::after { border-width: 5px 4px 0; border-top-color: #fff; right: -1px; bottom: -8px; }
.grp .w28 { width: 28px; }
.grp .w20 { width: 20px; }
.grp .w20 svg { width: 20px; }
.ga { width: 64px; padding-left: 3px; }
.gb { width: 184px; padding-left: 5px; }
.gc { width: 280px; padding-left: 5px; }
.gd { width: 130px; padding-left: 2px; }
.ge { width: 80px; padding-left: 3px; }
.grp .ml4 { margin-left: 4px; }
.grp .ml6 { margin-left: 6px; }
.grp .ml8 { margin-left: 8px; }
.status { display: flex; align-items: stretch; width: 732px; height: 23px; background: #e9effd; color: #000; }
.status output { flex: 1; padding-left: 10px; line-height: 22px; font-family: "Liberation Sans", "Noto Sans CJK SC", sans-serif; font-size: 11px; }
.status input { width: 200px; height: 21px; background: #343466; border: 2px solid #fff; outline: 1px solid #8d8a80; outline-offset: -1px; color: #fff; padding: 0 4px; }
.status button { width: 22px; }
.status svg { width: 14px; height: 14px; }

.right { width: 48px; padding: 8px 0 0; display: flex; flex-direction: column; align-items: flex-start; }
.rail { width: 34px; background: #e9effd; padding-bottom: 6px; }
.rail i { display: block; height: 3px; margin: 10px 4px 4px; border: solid #8d9bdc; border-width: 1px 0; }
.rail i:nth-of-type(1) { margin: 4px 4px 6px; }
.rail i:nth-of-type(2) { margin: 6px 4px 4px; }
.rail button { width: 30px; height: 24px; }
.rail .tall { height: 26px; }
.rail svg { width: 20px; height: 20px; }
.rail .drop::after { right: -1px; bottom: -4px; }
.more { width: 8px; height: 8px; margin: 2px 0 0 26px; fill: none; stroke: #fff; }

.float { position: absolute; width: 34px; background: #e7edfc; box-shadow: 0 2px 8px #0006; }
.sketch { right: 138px; top: 153px; height: 71px; }
.stub { right: 144px; top: 293px; height: 20px; }
.stub::before { content: ""; display: block; margin: 3px 4px; height: 4px; border: solid #8d9bdc; border-width: 1px 0; }
.long { right: 53px; top: 417px; height: 183px; }
.ftitle { height: 30px; background: #fff; display: flex; justify-content: flex-end; align-items: center; padding-right: 1px; }
.ftitle b { width: 5px; overflow: hidden; font-size: 9px; font-weight: 400; color: #777; }
.ftitle button { width: 19px; height: 19px; background: #e3e3e3; color: #fff; line-height: 16px; }
.fgrip { width: 16px; height: 3px; margin: 5px 3px; border: solid #aaa; border-width: 0 1px 1px 0; }
.fbtn { margin: 7px 0 0 7px; }
.fbtn svg { width: 26px; height: 24px; }

.net { position: absolute; right: 71px; top: 313px; width: 102px; height: 38px; display: flex; align-items: center; border-radius: 0 19px 19px 0; background: linear-gradient(#fff, #e0e0e0); box-shadow: 0 1px 5px #0008; }
.ball { flex: none; width: 48px; height: 48px; margin: -2px 0 0 -24px; border: 2px solid #e4e8e4; border-radius: 50%; background: radial-gradient(ellipse 8px 4px at 45% 12%, #fff9, #fff0), linear-gradient(#067947 50%, #4dcd60 50%); color: #fff; font-size: 13px; line-height: 42px; text-align: center; box-shadow: 0 1px 4px #0008; }
.rates { flex: 1; padding-left: 2px; color: #222; font: 10px/15px "DejaVu Sans", sans-serif; white-space: nowrap; }
.rates p { margin: 0; display: flex; gap: 12px; }
.up { color: #e0503a; }
.dn { color: #259b50; }
.net button { width: 16px; height: 16px; margin-right: 7px; border-radius: 50%; background: #3d86dd; color: #fff; font-size: 16px; line-height: 14px; box-shadow: 0 0 0 1px #b8c8dc; }

.axis { position: absolute; right: 52px; bottom: 51px; width: 44px; height: 32px; fill: none; stroke: #fff; }
.axis text { fill: #fff; stroke: none; font: 14px "Liberation Sans", sans-serif; }
.ds { position: absolute; right: 7px; bottom: 2px; width: 42px; height: 32px; }
.ds text { fill: #fff; stroke: #2b3468; stroke-width: 2px; paint-order: stroke; font: italic bold 10px "Liberation Sans", sans-serif; }

.watermark { position: absolute; right: 14px; bottom: 3px; width: 260px; display: flex; gap: 10px; pointer-events: none; opacity: .5; color: #fff; }
.watermark svg { flex: none; width: 72px; height: 82px; }
.watermark strong { display: block; font: bold 42px/46px "Noto Sans CJK SC", sans-serif; margin-top: 8px; white-space: nowrap; }
.watermark small { display: block; font: bold 15px/18px "DejaVu Sans", sans-serif; }

.behind { background: #f0f0f0; overflow: hidden; border-left: 1px solid #ddd; padding: 353px 0 0 4px; }
.behind p { margin: 0; width: 16px; color: #f60; font-size: 16px; line-height: 20px; word-break: break-all; }

.taskbar { grid-column: 1 / -1; display: flex; background: #05080c; padding: 1px 86px 0 45px; overflow: hidden; color: #fff; }
.search { width: 344px; background: #f2f2f2; }
.t1 { width: 36px; margin-left: 499px; background: #3a3e40; }
.t2 { width: 36px; margin-left: 1px; background: #9c5a24; }
.taskbar time { margin-left: auto; padding-top: 3px; font-size: 12px; line-height: 16px; }
```
